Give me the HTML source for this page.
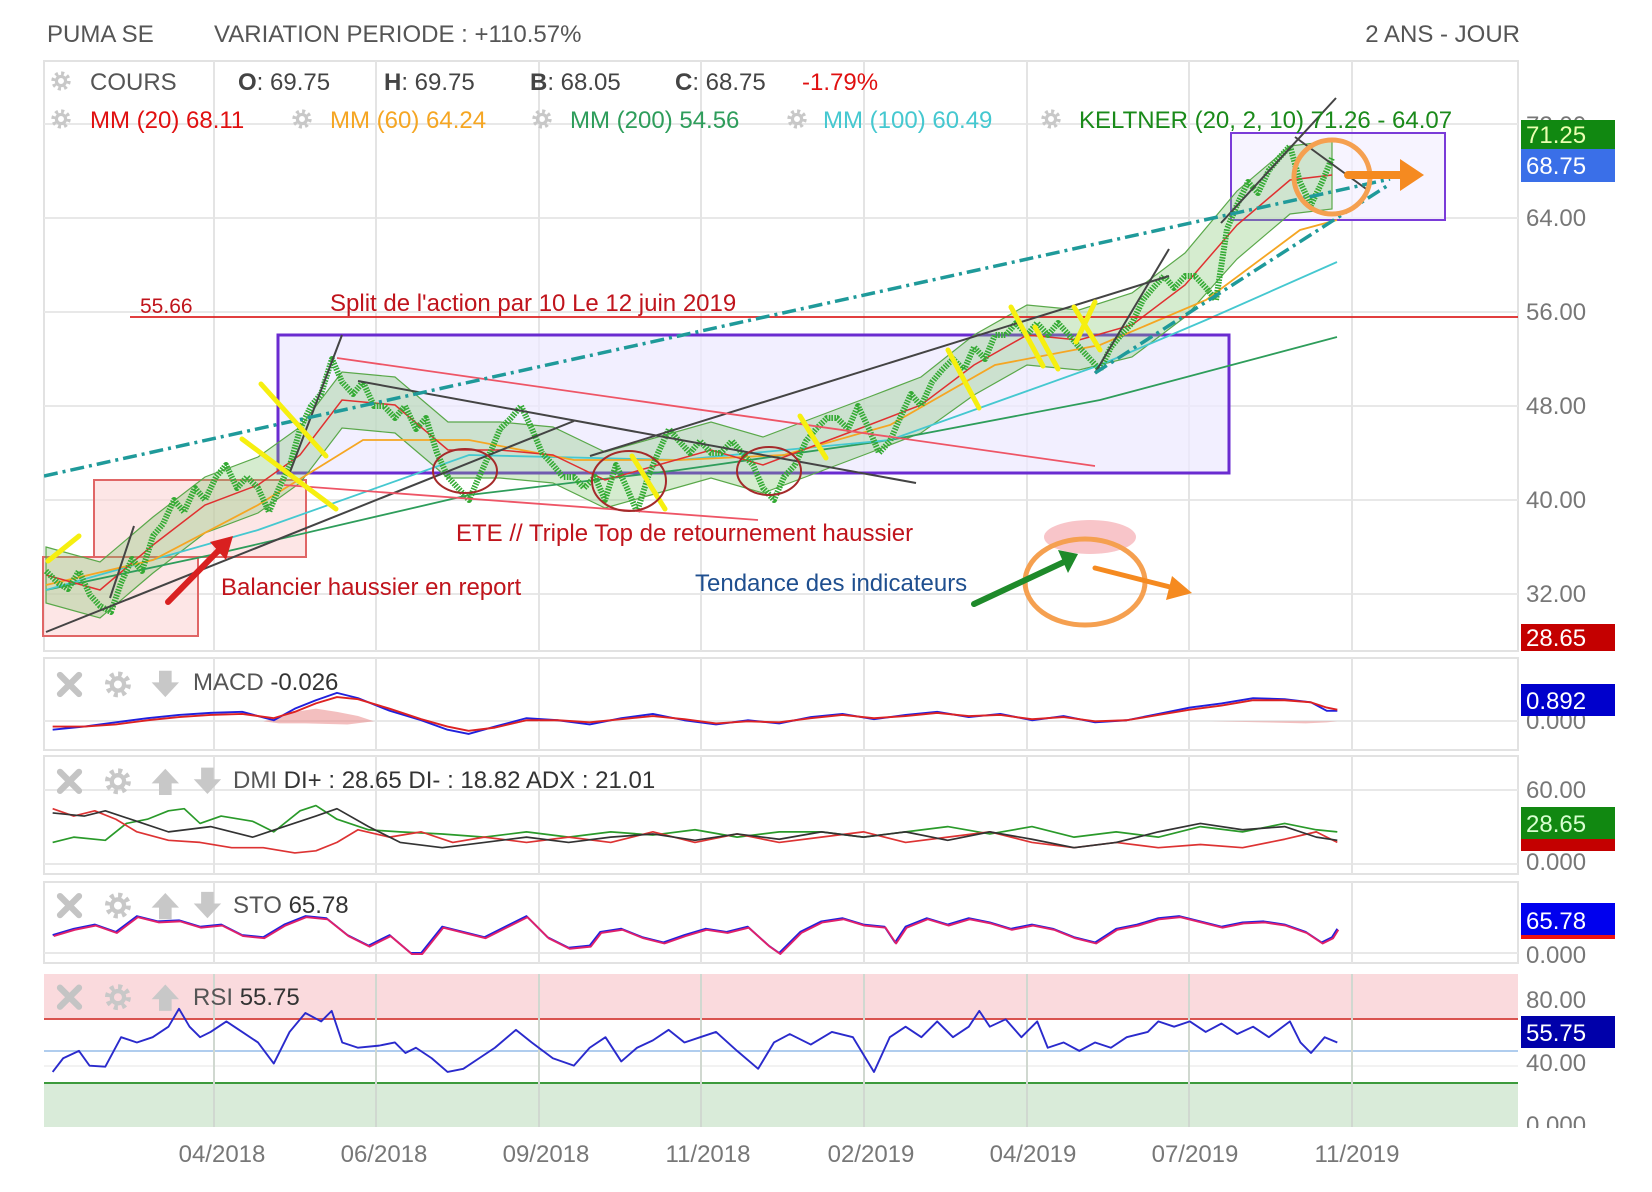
<!DOCTYPE html>
<html><head><meta charset="utf-8">
<style>
html,body{margin:0;padding:0;background:#fff;}
svg{display:block;font-family:"Liberation Sans",Arial,sans-serif;}
</style></head>
<body>
<svg width="1652" height="1192" viewBox="0 0 1652 1192" xmlns="http://www.w3.org/2000/svg">
<defs>
<clipPath id="cm"><rect x="44" y="61" width="1474" height="590"/></clipPath>
<symbol id="gr" viewBox="-12 -12 24 24"><circle r="5" fill="none" stroke="#c8c8c8" stroke-width="3.5"/><circle r="8.3" fill="none" stroke="#c8c8c8" stroke-width="4.5" stroke-dasharray="3.2 3.3"/></symbol>
</defs>
<rect width="1652" height="1192" fill="#fff"/>
<text x="47" y="42" font-size="24" fill="#555">PUMA SE</text>
<text x="214" y="42" font-size="24" fill="#555">VARIATION PERIODE : +110.57%</text>
<text x="1520" y="42" font-size="24" fill="#555" text-anchor="end">2 ANS - JOUR</text>

<g fill="none" stroke="#e2e2e2" stroke-width="2">
<rect x="44" y="61" width="1474" height="590"/>
<rect x="44" y="658" width="1474" height="92"/>
<rect x="44" y="756" width="1474" height="118"/>
<rect x="44" y="882" width="1474" height="81"/>
</g>
<rect x="44" y="974" width="1474" height="45" fill="#fadadd"/>
<rect x="44" y="1083" width="1474" height="44" fill="#d9ebd9"/>
<line x1="44" y1="1019" x2="1518" y2="1019" stroke="#d9534f" stroke-width="2"/>
<line x1="44" y1="1051" x2="1518" y2="1051" stroke="#b0cdee" stroke-width="2"/>
<line x1="44" y1="1066" x2="1518" y2="1066" stroke="#eee" stroke-width="1.5"/>
<line x1="44" y1="1083" x2="1518" y2="1083" stroke="#3c9a3c" stroke-width="2"/>

<g stroke="#e8e8e8" stroke-width="2">
<line x1="44" y1="124" x2="1518" y2="124"/>
<line x1="44" y1="218" x2="1518" y2="218"/>
<line x1="44" y1="312" x2="1518" y2="312"/>
<line x1="44" y1="406" x2="1518" y2="406"/>
<line x1="44" y1="500" x2="1518" y2="500"/>
<line x1="44" y1="594" x2="1518" y2="594"/>
<line x1="44" y1="721" x2="1518" y2="721"/>
<line x1="44" y1="790" x2="1518" y2="790"/>
<line x1="44" y1="864" x2="1518" y2="864"/>
<line x1="44" y1="953" x2="1518" y2="953"/>
</g>
<g stroke="#e4e4e4" stroke-width="2">
<path d="M214 61V651M376 61V651M539 61V651M701 61V651M864 61V651M1027 61V651M1189 61V651M1352 61V651"/>
<path d="M214 658V750M376 658V750M539 658V750M701 658V750M864 658V750M1027 658V750M1189 658V750M1352 658V750"/>
<path d="M214 756V874M376 756V874M539 756V874M701 756V874M864 756V874M1027 756V874M1189 756V874M1352 756V874"/>
<path d="M214 882V963M376 882V963M539 882V963M701 882V963M864 882V963M1027 882V963M1189 882V963M1352 882V963"/>
<path d="M214 974V1127M376 974V1127M539 974V1127M701 974V1127M864 974V1127M1027 974V1127M1189 974V1127M1352 974V1127" stroke="#d0d8d0"/>
</g>

<rect x="278" y="335" width="951" height="138" fill="#eeeaff" fill-opacity="0.75" stroke="#6a2bd0" stroke-width="3"/>
<rect x="1231" y="133" width="214" height="87" fill="#f4efff" fill-opacity="0.7" stroke="#7a3bd8" stroke-width="2"/>
<rect x="94" y="480" width="212" height="77" fill="#fbd5d5" fill-opacity="0.6" stroke="#e06666" stroke-width="2"/>
<rect x="43" y="557" width="155" height="79" fill="#fbd5d5" fill-opacity="0.6" stroke="#e06666" stroke-width="2"/>

<g clip-path="url(#cm)">
<polygon points="46,547 100,562 153,517 205,477 258,457 300,427 342,372 395,377 448,422 500,422 553,427 605,452 658,437 711,422 763,437 816,417 869,397 921,377 974,335 1027,305 1079,310 1132,293 1185,253 1237,191 1290,146 1332,141 1332,209 1290,214 1237,259 1185,317 1132,357 1079,370 1027,365 974,395 921,433 869,453 816,473 763,493 711,478 658,493 605,508 553,483 500,478 448,478 395,433 342,428 300,483 258,513 205,533 153,573 100,618 46,603" fill="#7cc46a" fill-opacity="0.32" stroke="#5aa84a" stroke-width="1.2"/>
<polyline fill="none" stroke="#2e9d5b" stroke-width="1.8" points="46,590 211,555 469,495 679,470 890,440 1100,400 1337,337"/>
<polyline fill="none" stroke="#45c8d0" stroke-width="1.8" points="46,590 258,530 469,455 679,460 890,440 1100,365 1206,320 1337,262"/>
<polyline fill="none" stroke="#f5a623" stroke-width="1.8" points="46,585 153,560 258,505 363,440 469,440 574,460 679,460 784,455 890,425 995,365 1100,345 1206,300 1300,230 1337,220"/>
<polyline fill="none" stroke="#e03030" stroke-width="1.5" points="46,575 100,590 153,545 205,505 258,485 300,455 342,400 395,405 448,450 500,450 553,455 605,480 658,465 711,450 763,465 816,445 869,425 921,405 974,365 1027,335 1079,340 1132,325 1185,285 1237,225 1290,180 1332,175"/>
<g fill="none" stroke-linejoin="round">
<polyline id="cl" stroke="#33aa33" stroke-width="6" stroke-dasharray="1.6 4" points="46,571 58,583 68,589 79,571 90,595 100,606 111,612 121,583 132,559 142,571 153,536 163,524 174,500 184,512 195,488 205,500 216,477 226,465 237,488 247,477 258,488 269,512 279,488 290,465 300,429 311,406 321,394 332,359 342,382 353,394 363,382 374,406 384,406 395,418 405,406 416,429 426,418 437,453 448,477 458,488 469,500 479,477 490,453 500,429 511,418 521,406 532,429 542,453 553,465 563,477 574,477 584,488 595,477 605,500 616,465 627,488 637,512 648,477 658,453 669,429 679,441 690,453 700,441 711,453 721,453 732,441 742,453 753,465 763,488 774,500 784,477 795,465 806,441 816,429 827,418 837,418 848,429 858,406 869,429 879,453 890,441 900,418 911,394 921,406 932,382 942,370 953,359 964,370 974,347 985,359 995,335 1006,335 1016,323 1027,335 1037,323 1048,335 1058,323 1069,335 1079,347 1090,359 1100,370 1111,347 1121,335 1132,323 1143,300 1153,288 1164,276 1174,288 1185,276 1195,276 1206,288 1216,300 1227,229 1237,205 1248,182 1258,193 1269,170 1279,158 1290,146 1300,182 1311,205 1322,182 1332,158"/>
<use href="#cl" stroke="#cc3333" stroke-dashoffset="3" stroke-dasharray="1.6 9"/>
</g>

<line x1="130" y1="317" x2="1518" y2="317" stroke="#d22" stroke-width="1.8"/>
<g stroke="#444" stroke-width="2">
<line x1="46" y1="632" x2="574" y2="421"/>
<line x1="290" y1="472" x2="342" y2="335"/>
<line x1="358" y1="381" x2="916" y2="483"/>
<line x1="590" y1="456" x2="1169" y2="276"/>
<line x1="1095" y1="373" x2="1169" y2="249"/>
<line x1="1221" y1="223" x2="1336" y2="98"/>
<line x1="1295" y1="137" x2="1369" y2="191"/>
<line x1="110" y1="598" x2="134" y2="526"/>
</g>
<g stroke="#ee5566" stroke-width="1.8">
<line x1="337" y1="358" x2="1095" y2="466"/>
<line x1="284" y1="485" x2="758" y2="520"/>
</g>
<g stroke="#1f9a9a" stroke-width="3.5" stroke-dasharray="14,5,3,5" fill="none">
<line x1="44" y1="476" x2="1390" y2="179"/>
<line x1="1095" y1="373" x2="1390" y2="184"/>
</g>
<g stroke="#f6ef10" stroke-width="5" stroke-linecap="round">
<line x1="261" y1="384" x2="326" y2="456"/>
<line x1="242" y1="439" x2="336" y2="509"/>
<line x1="48" y1="561" x2="79" y2="536"/>
<line x1="632" y1="456" x2="665" y2="509"/>
<line x1="800" y1="416" x2="826" y2="458"/>
<line x1="948" y1="350" x2="979" y2="408"/>
<line x1="1011" y1="307" x2="1043" y2="366"/>
<line x1="1074" y1="307" x2="1100" y2="350"/>
<line x1="1035" y1="327" x2="1058" y2="369"/>
<line x1="1095" y1="302" x2="1076" y2="342"/>
</g>
<g fill="none" stroke="#a52a2a" stroke-width="2">
<ellipse cx="465" cy="471" rx="32" ry="22"/>
<ellipse cx="629" cy="481" rx="37" ry="30"/>
<ellipse cx="769" cy="471" rx="32" ry="24"/>
</g>
<ellipse cx="1090" cy="537" rx="46" ry="17" fill="#f6b7bb" fill-opacity="0.8"/>
<ellipse cx="1085" cy="582" rx="60" ry="43" fill="none" stroke="#f5a050" stroke-width="5"/>
<ellipse cx="1332" cy="177" rx="38" ry="37" fill="none" stroke="#f5a050" stroke-width="5"/>
<g stroke-linecap="round">
<line x1="974" y1="604" x2="1064" y2="562" stroke="#1e8a2a" stroke-width="6"/>
<polygon points="1078,554 1058,550 1068,573" fill="#1e8a2a"/>
<line x1="1095" y1="568" x2="1174" y2="588" stroke="#f58a20" stroke-width="5"/>
<polygon points="1192,593 1172,576 1166,600" fill="#f58a20"/>
<line x1="168" y1="602" x2="220" y2="549" stroke="#d92020" stroke-width="6"/>
<polygon points="233,536 210,542 226,560" fill="#d92020"/>
<line x1="1348" y1="175" x2="1405" y2="175" stroke="#f58a20" stroke-width="8"/>
<polygon points="1424,175 1400,159 1400,191" fill="#f58a20"/>
</g>
</g>
<text x="140" y="313" font-size="21" fill="#c0141c">55.66</text>
<text x="330" y="311" font-size="24" fill="#c0141c">Split de l'action par 10 Le 12 juin 2019</text>
<text x="456" y="541" font-size="24" fill="#c0141c">ETE // Triple Top de retournement haussier</text>
<text x="221" y="595" font-size="24" fill="#c0141c">Balancier haussier en report</text>
<text x="695" y="591" font-size="24" fill="#1f4f8f">Tendance des indicateurs</text>

<g font-size="24">
<use href="#gr" x="50" y="70" width="22" height="22"/>
<text x="90" y="90" fill="#555">COURS</text>
<text x="238" y="90" fill="#444"><tspan font-weight="bold">O</tspan>: 69.75</text>
<text x="384" y="90" fill="#444"><tspan font-weight="bold">H</tspan>: 69.75</text>
<text x="530" y="90" fill="#444"><tspan font-weight="bold">B</tspan>: 68.05</text>
<text x="675" y="90" fill="#444"><tspan font-weight="bold">C</tspan>: 68.75</text>
<text x="802" y="90" fill="#e01010">-1.79%</text>
<use href="#gr" x="50" y="108" width="22" height="22"/>
<text x="90" y="128" fill="#e01010">MM (20)  68.11</text>
<use href="#gr" x="291" y="108" width="22" height="22"/>
<text x="330" y="128" fill="#f5a623">MM (60)  64.24</text>
<use href="#gr" x="531" y="108" width="22" height="22"/>
<text x="570" y="128" fill="#2e9d5b">MM (200)  54.56</text>
<use href="#gr" x="786" y="108" width="22" height="22"/>
<text x="823" y="128" fill="#45c8d0">MM (100)  60.49</text>
<use href="#gr" x="1040" y="108" width="22" height="22"/>
<text x="1079" y="128" fill="#1a8a1a">KELTNER (20, 2, 10) 71.26 - 64.07</text>
</g>

<g transform="scale(1.053)" fill="none" stroke-linejoin="round">
<path d="M250,685 L265,682 280,676 300,673 320,676 340,680 355,685 330,688 290,687 265,687Z M1150,685 1200,686 1240,687 1260,686 1270,685Z" fill="#e88080" fill-opacity="0.5" stroke="none"/>
<polyline stroke="#2020dd" stroke-width="1.8" points="50,693 80,690 110,686 140,682 170,679 200,677 230,676 260,684 280,673 300,665 320,658 340,663 370,675 400,684 425,693 445,697 470,690 500,682 530,684 560,688 590,682 620,678 650,684 680,688 710,684 740,687 770,681 800,678 830,683 860,679 890,676 920,681 950,678 980,684 1010,680 1040,686 1070,684 1100,678 1130,672 1160,668 1190,663 1220,664 1245,667 1260,675 1270,675"/>
<polyline stroke="#dd2222" stroke-width="1.8" points="50,690 80,690 110,688 140,684 170,681 200,679 230,678 260,682 280,676 300,668 320,662 340,664 370,673 400,683 425,690 445,694 470,691 500,684 530,684 560,686 590,683 620,680 650,683 680,687 710,685 740,686 770,682 800,679 830,682 860,680 890,677 920,680 950,679 980,683 1010,681 1040,685 1070,684 1100,679 1130,674 1160,670 1190,665 1220,665 1245,667 1260,672 1270,674"/>
<polyline stroke="#2a9a2a" stroke-width="1.6" points="50,800 70,795 100,798 120,782 140,778 160,770 175,768 190,782 210,775 240,780 260,790 285,770 300,765 320,778 350,788 380,790 420,792 460,795 500,790 540,795 580,790 620,793 660,788 700,795 740,790 780,790 820,795 860,790 900,785 940,792 980,785 1020,795 1060,790 1100,795 1140,785 1180,790 1220,782 1250,788 1270,790"/>
<polyline stroke="#dd3333" stroke-width="1.6" points="50,768 70,775 90,770 110,778 130,790 160,798 190,800 220,805 250,805 280,810 300,808 320,800 340,788 370,795 400,790 430,800 460,795 500,800 540,795 580,800 620,790 660,800 700,792 740,800 780,795 820,790 860,800 900,795 940,790 980,800 1020,805 1060,800 1100,805 1140,802 1180,805 1220,797 1250,790 1270,800"/>
<polyline stroke="#333" stroke-width="1.6" points="50,772 80,775 100,770 130,780 160,790 200,785 240,795 270,785 300,775 320,768 350,785 380,800 420,805 460,800 500,795 540,800 580,795 620,792 660,798 700,792 740,797 780,790 820,795 860,790 900,798 940,790 980,797 1020,805 1060,800 1100,790 1140,782 1180,788 1220,785 1250,795 1270,798"/>
<polyline stroke="#2020dd" stroke-width="1.8" points="50,888 70,882 90,878 110,885 130,870 150,875 170,874 190,880 210,878 230,888 250,890 270,878 290,870 310,872 330,888 350,898 370,888 390,905 400,905 420,880 440,885 460,890 480,880 500,870 520,890 540,900 560,898 570,885 590,882 610,890 630,895 650,888 670,882 690,885 710,880 730,898 740,905 760,885 780,875 800,872 820,878 840,880 850,895 860,880 880,872 900,878 920,872 940,876 960,882 980,878 1000,882 1020,890 1040,895 1060,882 1080,878 1100,872 1120,870 1140,875 1160,880 1180,876 1200,875 1220,878 1240,885 1255,895 1265,890 1270,882"/>
<polyline stroke="#e0206a" stroke-width="1.8" transform="translate(1,1)" points="50,888 70,882 90,878 110,885 130,870 150,875 170,874 190,880 210,878 230,888 250,890 270,878 290,870 310,872 330,888 350,898 370,888 390,905 400,905 420,880 440,885 460,890 480,880 500,870 520,890 540,900 560,898 570,885 590,882 610,890 630,895 650,888 670,882 690,885 710,880 730,898 740,905 760,885 780,875 800,872 820,878 840,880 850,895 860,880 880,872 900,878 920,872 940,876 960,882 980,878 1000,882 1020,890 1040,895 1060,882 1080,878 1100,872 1120,870 1140,875 1160,880 1180,876 1200,875 1220,878 1240,885 1255,895 1265,890 1270,882"/>
<polyline stroke="#2a2acc" stroke-width="1.8" points="50,1018 60,1005 75,998 85,1012 100,1013 115,985 130,990 145,985 160,975 170,958 180,975 190,985 200,980 215,970 230,980 245,990 260,1010 275,980 290,962 305,970 315,960 325,990 340,995 360,993 375,990 385,1000 395,995 410,1005 425,1018 440,1015 455,1005 470,995 490,978 505,990 525,1005 545,1012 560,995 575,985 590,1008 605,995 620,988 635,978 650,990 665,985 680,980 700,998 720,1015 735,990 750,982 770,992 790,980 810,985 830,1018 845,985 860,975 875,985 890,970 905,985 920,975 930,960 940,975 955,968 970,985 985,970 995,995 1010,990 1025,998 1040,990 1055,995 1070,985 1090,980 1100,970 1115,975 1130,970 1145,980 1160,972 1175,982 1190,975 1205,985 1225,970 1235,990 1245,1000 1258,985 1270,990"/>
<g stroke="#c4c4c4" stroke-width="6" stroke-linecap="round">
<path d="M57,641L75,659M75,641L57,659"/>
<path d="M57,733L75,751M75,733L57,751"/>
<path d="M57,851L75,869M75,851L57,869"/>
<path d="M57,938L75,956M75,938L57,956"/>
</g>
<use href="#gr" x="98" y="636" width="28" height="28"/>
<use href="#gr" x="98" y="728" width="28" height="28"/>
<use href="#gr" x="98" y="846" width="28" height="28"/>
<use href="#gr" x="98" y="933" width="28" height="28"/>
<g fill="#c8c8c8" stroke="none">
<polygon points="151,637 163,637 163,648 170,648 157,662 144,648 151,648"/>
<polygon points="151,755 163,755 163,744 170,744 157,730 144,744 151,744"/>
<polygon points="191,729 203,729 203,740 210,740 197,754 184,740 191,740"/>
<polygon points="151,873 163,873 163,862 170,862 157,848 144,862 151,862"/>
<polygon points="191,847 203,847 203,858 210,858 197,872 184,858 191,858"/>
<polygon points="151,960 163,960 163,949 170,949 157,935 144,949 151,949"/>
</g>
</g>
<g font-size="24" fill="#555">
<text x="193" y="690">MACD <tspan fill="#333">-0.026</tspan></text>
<text x="233" y="788">DMI <tspan fill="#333">DI+ : 28.65 DI- : 18.82 ADX : 21.01</tspan></text>
<text x="233" y="913">STO <tspan fill="#333">65.78</tspan></text>
<text x="193" y="1005">RSI <tspan fill="#333">55.75</tspan></text>
</g>

<g font-size="24" fill="#777">
<text x="1526" y="133">72.00</text>
<text x="1526" y="226">64.00</text>
<text x="1526" y="320">56.00</text>
<text x="1526" y="414">48.00</text>
<text x="1526" y="508">40.00</text>
<text x="1526" y="602">32.00</text>
<text x="1526" y="729">0.000</text>
<text x="1526" y="798">60.00</text>
<text x="1526" y="870">0.000</text>
<text x="1526" y="963">0.000</text>
<text x="1526" y="1008">80.00</text>
<text x="1526" y="1071">40.00</text>
<text x="1526" y="1133">0.000</text>
</g>
<g font-size="24" fill="#fff">
<rect x="1521" y="120" width="94" height="29" fill="#118811"/><text x="1526" y="143" fill="#eaffb0">71.25</text>
<rect x="1521" y="149" width="94" height="33" fill="#3a6fe8"/><text x="1526" y="174">68.75</text>
<rect x="1521" y="624" width="94" height="27" fill="#c40000"/><text x="1526" y="646">28.65</text>
<rect x="1521" y="684" width="94" height="32" fill="#0000cc"/><text x="1526" y="709">0.892</text>
<rect x="1521" y="807" width="94" height="44" fill="#c40000"/>
<rect x="1521" y="807" width="94" height="32" fill="#118811"/><text x="1526" y="832" fill="#d8ffd0">28.65</text>
<rect x="1521" y="903" width="94" height="35" fill="#0000ee"/><rect x="1521" y="935" width="94" height="4" fill="#ee1111"/><text x="1526" y="929">65.78</text>
<rect x="1521" y="1016" width="94" height="32" fill="#0000aa"/><text x="1526" y="1041">55.75</text>
</g>
<rect x="1520" y="1128" width="132" height="64" fill="#fff"/>

<g font-size="24" fill="#777" text-anchor="middle">
<text x="222" y="1162">04/2018</text>
<text x="384" y="1162">06/2018</text>
<text x="546" y="1162">09/2018</text>
<text x="708" y="1162">11/2018</text>
<text x="871" y="1162">02/2019</text>
<text x="1033" y="1162">04/2019</text>
<text x="1195" y="1162">07/2019</text>
<text x="1357" y="1162">11/2019</text>
</g>
</svg>
</body></html>
